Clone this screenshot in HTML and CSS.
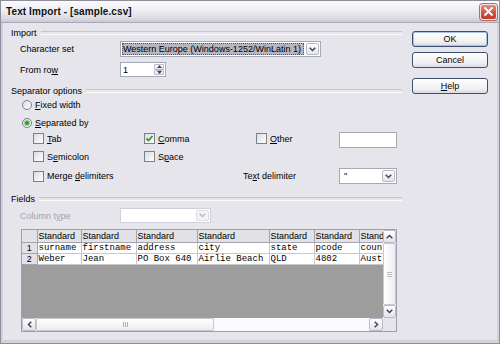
FILE: index.html
```html
<!DOCTYPE html>
<html>
<head>
<meta charset="utf-8">
<link rel="stylesheet" href="styles.css">
</head>
<body>
<div class="window">
  <div class="titlebar">
    <span class="title">Text Import - [sample.csv]</span>
    <span class="close"><svg width="11" height="11" viewBox="0 0 11 11"><path d="M1.5 1.5 L9.5 9.5 M9.5 1.5 L1.5 9.5" stroke="#fff" stroke-width="1.8" fill="none"/></svg></span>
  </div>
  <div class="content">
    <div class="main">
      <div class="group-title"><span>Import</span></div>
      <div class="row r-charset">
        <span class="lbl">Character set</span>
        <div class="select charset">
          <span class="sel-text"><span class="hl">Western Europe (Windows-1252/WinLatin 1)</span></span>
          <span class="drop"><svg width="7" height="5" viewBox="0 0 7 5"><path d="M0.7 0.7 L3.5 3.5 L6.3 0.7" stroke="#3c4660" stroke-width="1.5" fill="none"/></svg></span>
        </div>
      </div>
      <div class="row r-from">
        <span class="lbl">From ro<u>w</u></span>
        <div class="spin">
          <span class="spin-val">1</span>
          <span class="spin-btns">
            <span class="sb"><svg width="5" height="3" viewBox="0 0 5 3"><path d="M0 3 L2.5 0 L5 3 Z" fill="#3c4660"/></svg></span>
            <span class="sb"><svg width="5" height="3" viewBox="0 0 5 3"><path d="M0 0 L2.5 3 L5 0 Z" fill="#3c4660"/></svg></span>
          </span>
        </div>
      </div>

      <div class="group-title g-sep"><span>Separator options</span></div>
      <div class="radio-row r1"><span class="radio"></span><span><u>F</u>ixed width</span></div>
      <div class="radio-row r2"><span class="radio on"><span class="dot"></span></span><span><u>S</u>eparated by</span></div>

      <div class="checks">
        <div class="chk c-r1"><span class="box"></span><span><u>T</u>ab</span></div>
        <div class="chk c-r1"><span class="box on"><svg width="9" height="9" viewBox="0 0 9 9"><path d="M1.5 4.5 L3.5 6.5 L7.5 2" stroke="#21a121" stroke-width="1.8" fill="none"/></svg></span><span><u>C</u>omma</span></div>
        <div class="chk c-r1"><span class="box"></span><span><u>O</u>ther</span></div>
        <div class="textbox other"></div>

        <div class="chk c-r2"><span class="box"></span><span>S<u>e</u>micolon</span></div>
        <div class="chk c-r2"><span class="box"></span><span>S<u>p</u>ace</span></div>
        <div></div>
        <div></div>

        <div class="chk c-r3"><span class="box"></span><span>Merge <u>d</u>elimiters</span></div>
        <div class="txtdelim">Te<u>x</u>t delimiter</div>
        <div class="select small">
          <span class="sel-text white">"</span>
          <span class="drop"><svg width="7" height="5" viewBox="0 0 7 5"><path d="M0.7 0.7 L3.5 3.5 L6.3 0.7" stroke="#3c4660" stroke-width="1.5" fill="none"/></svg></span>
        </div>
      </div>

      <div class="group-title g-fields"><span>Fields</span></div>
      <div class="row r-coltype">
        <span class="lbl disabled">Column t<u>y</u>pe</span>
        <div class="select coltype">
          <span class="sel-text white"></span>
          <span class="drop dis"><svg width="7" height="5" viewBox="0 0 7 5"><path d="M0.7 0.7 L3.5 3.5 L6.3 0.7" stroke="#b8b8c0" stroke-width="1.5" fill="none"/></svg></span>
        </div>
      </div>

      <div class="grid-frame">
        <div class="grid-view">
          <table class="data">
            <colgroup>
              <col class="cn"><col class="w44"><col class="w55"><col class="w61"><col class="w72"><col class="w45"><col class="w45"><col class="w45">
            </colgroup>
            <tr class="hdr">
              <th class="corner"></th><th>Standard</th><th>Standard</th><th>Standard</th><th>Standard</th><th>Standard</th><th>Standard</th><th>Standard</th>
            </tr>
            <tr>
              <th class="num">1</th><td>surname</td><td>firstname</td><td>address</td><td>city</td><td>state</td><td>pcode</td><td>country</td>
            </tr>
            <tr>
              <th class="num">2</th><td>Weber</td><td>Jean</td><td>PO Box 640</td><td>Airlie Beach</td><td>QLD</td><td>4802</td><td>Australia</td>
            </tr>
          </table>
        </div>
        <div class="vscroll">
          <span class="sbtn"><svg width="7" height="5" viewBox="0 0 7 5"><path d="M0.7 4.3 L3.5 1.5 L6.3 4.3" stroke="#3c4660" stroke-width="1.5" fill="none"/></svg></span>
          <span class="vthumb"><span class="grip-h"></span></span>
          <span class="sbtn"><svg width="7" height="5" viewBox="0 0 7 5"><path d="M0.7 0.7 L3.5 3.5 L6.3 0.7" stroke="#3c4660" stroke-width="1.5" fill="none"/></svg></span>
        </div>
        <div class="hscroll">
          <span class="sbtn"><svg width="5" height="7" viewBox="0 0 5 7"><path d="M4.3 0.7 L1.5 3.5 L4.3 6.3" stroke="#3c4660" stroke-width="1.5" fill="none"/></svg></span>
          <span class="hthumb"><span class="grip-v"></span></span>
          <span class="htrack"></span>
          <span class="sbtn"><svg width="5" height="7" viewBox="0 0 5 7"><path d="M0.7 0.7 L3.5 3.5 L0.7 6.3" stroke="#3c4660" stroke-width="1.5" fill="none"/></svg></span>
        </div>
        <div class="sc-corner"></div>
      </div>
    </div>

    <div class="buttons">
      <div class="btn default">OK</div>
      <div class="btn cancel">Cancel</div>
      <div class="btn help"><u>H</u>elp</div>
    </div>
  </div>
</div>
</body>
</html>
```

FILE: styles.css
```css
* { box-sizing: border-box; }
html, body { margin: 0; padding: 0; }
body {
  width: 500px;
  height: 344px;
  overflow: hidden;
  font-family: "Liberation Sans", Arial, sans-serif;
  font-size: 9px;
  color: #000;
  background: #e5e4ea;
}
u { text-decoration: underline; text-underline-offset: 1px; }

.window {
  width: 500px;
  height: 344px;
  border: 1px solid #8d8d9c;
  background: #e6e5eb;
  display: flex;
  flex-direction: column;
  box-shadow: inset -2px -3px 0 #d2d2dc, inset 2px 0 0 #d2d2dc;
}

.titlebar {
  height: 22px;
  flex: none;
  display: flex;
  align-items: center;
  justify-content: space-between;
  padding: 0 2px 0 5px;
  background: linear-gradient(#fbfbfd 0%, #eeeef3 45%, #dcdce4 80%, #c9c9d4 100%);
  border-bottom: 1px solid #a8a8b6;
}
.title {
  font-weight: bold;
  font-size: 10px;
  color: #111;
  letter-spacing: 0.1px;
}
.close {
  width: 17px;
  height: 16px;
  border-radius: 3px;
  border: 1px solid #f3e9e6;
  background: linear-gradient(#e98c7c, #d4533f 55%, #c03a28);
  display: flex;
  align-items: center;
  justify-content: center;
  box-shadow: 0 0 0 1px #b96a5e;
}

.content {
  flex: 1;
  display: flex;
  padding: 3px 0 0 10px;
}
.main {
  width: 391px;
  display: flex;
  flex-direction: column;
}

.group-title {
  height: 12px;
  display: flex;
  align-items: center;
  gap: 4px;
  margin-top: 1px;
}
.group-title::after {
  content: "";
  flex: 1;
  height: 2px;
  border-top: 1px solid #c6c5cd;
  border-bottom: 1px solid #fafafc;
}
.g-sep { margin-top: 8px; }
.g-fields { margin-top: 9px; }

.row {
  display: flex;
  align-items: center;
  padding-left: 9px;
}
.lbl { width: 100px; flex: none; }
.disabled { color: #a3a2ac; }
.r-charset { margin-top: 2px; height: 16px; }
.r-from { margin-top: 5px; height: 15px; }
.r-coltype { margin-top: 3px; height: 15px; }

.select {
  display: flex;
  height: 100%;
  border: 1px solid #a5a9b6;
  background: #fff;
}
.select.charset { width: 201px; }
.select.coltype { width: 91px; border-color: #cfd0d8; }
.select.small { width: 58px; height: 16px; }
.sel-text {
  flex: 1;
  display: flex;
  align-items: center;
  padding: 1px;
  overflow: hidden;
  white-space: nowrap;
}
.sel-text .hl {
  flex: 1;
  height: 100%;
  display: flex;
  align-items: center;
  padding-left: 1px;
  background: #b6b6c0;
  outline: 1px dotted #555;
  outline-offset: -1px;
}
.sel-text.white { padding-left: 4px; }
.drop {
  width: 13px;
  flex: none;
  margin: 1px;
  border: 1px solid #b9bcc8;
  border-radius: 2px;
  background: linear-gradient(#ffffff, #e4e4ec);
  display: flex;
  align-items: center;
  justify-content: center;
}
.drop.dis { border-color: #dcdce2; background: #f4f4f7; }

.spin {
  width: 46px;
  height: 100%;
  display: flex;
  border: 1px solid #a5a9b6;
  background: #fff;
}
.spin-val {
  flex: 1;
  display: flex;
  align-items: center;
  padding-left: 2px;
}
.spin-btns {
  width: 12px;
  display: flex;
  flex-direction: column;
  padding: 1px;
  gap: 0;
}
.sb {
  flex: 1;
  border: 1px solid #b9bcc8;
  border-radius: 1px;
  background: linear-gradient(#ffffff, #e2e2ea);
  display: flex;
  align-items: center;
  justify-content: center;
}

.radio-row {
  display: flex;
  align-items: center;
  gap: 3px;
  padding-left: 11px;
  height: 10px;
}
.radio-row.r1 { margin-top: 3px; }
.radio-row.r2 { margin-top: 8px; }
.radio {
  width: 10px;
  height: 10px;
  border-radius: 50%;
  border: 1px solid #7d7f8c;
  background: linear-gradient(135deg, #dcdce2, #ffffff);
  display: flex;
  align-items: center;
  justify-content: center;
}
.dot {
  width: 4px;
  height: 4px;
  border-radius: 50%;
  background: #2ea02e;
  box-shadow: 0 0 0 1px #8fd08f;
}

.checks {
  margin-top: 4px;
  padding-left: 22px;
  display: grid;
  grid-template-columns: 111px 112px 83px 58px;
  grid-template-rows: 18px 18px 16px;
}
.chk {
  display: flex;
  align-items: center;
  gap: 3px;
  height: 11px;
}
.c-r1, .c-r2 { margin-top: 1px; }
.c-r3 { align-self: center; }
.box {
  width: 11px;
  height: 11px;
  flex: none;
  border: 1px solid #7d7f8c;
  background: linear-gradient(135deg, #dcdce2, #ffffff);
  display: flex;
  align-items: center;
  justify-content: center;
}
.textbox.other {
  height: 16px;
  border: 1px solid #a5a9b6;
  background: #fff;
}
.txtdelim {
  grid-column: 2 / 4;
  align-self: center;
  padding-left: 99px;
}

.grid-frame {
  margin-top: 6px;
  margin-left: 10px;
  width: 376px;
  height: 103px;
  border: 1px solid #9e9eaa;
  display: grid;
  grid-template-columns: 361px 13px;
  grid-template-rows: 88px 13px;
  background: #e6e5eb;
}
.grid-view {
  background: #9d9d9d;
  overflow: hidden;
}
table.data {
  border-collapse: collapse;
  table-layout: fixed;
  width: 382px;
}
col.cn { width: 15px; }
col.w44 { width: 44px; }
col.w55 { width: 55px; }
col.w61 { width: 61px; }
col.w72 { width: 72px; }
col.w45 { width: 45px; }
table.data th, table.data td {
  padding: 0 0 0 1px;
  white-space: nowrap;
  overflow: hidden;
  text-align: left;
  font-weight: normal;
}
tr.hdr th {
  height: 12px;
  background: #e2e2e6;
  border-right: 1px solid #a4a4ac;
  border-bottom: 1px solid #a4a4ac;
  font-size: 9px;
}
th.num {
  background: #e2e2e6;
  border-right: 1px solid #a4a4ac;
  border-bottom: 1px solid #a4a4ac;
  text-align: center !important;
  font-family: "Liberation Sans", Arial, sans-serif;
  font-size: 9px;
  height: 11px;
  padding: 0 !important;
}
table.data td {
  height: 11px;
  background: #fff;
  border-right: 1px solid #c8c8cc;
  border-bottom: 1px solid #c8c8cc;
  font-family: "Liberation Mono", "Courier New", monospace;
  font-size: 9px;
  line-height: 10px;
}

.vscroll {
  display: flex;
  flex-direction: column;
  background: #f3f3f6;
}
.hscroll {
  display: flex;
  background: #f3f3f6;
}
.sbtn {
  width: 13px;
  height: 13px;
  flex: none;
  border: 1px solid #b9bcc8;
  border-radius: 2px;
  background: linear-gradient(#ffffff, #e2e2ea);
  display: flex;
  align-items: center;
  justify-content: center;
}
.hscroll .sbtn { width: 14px; }
.vthumb {
  flex: 1;
  border: 1px solid #c6c8d2;
  border-radius: 2px;
  background: linear-gradient(90deg, #ffffff, #ececf2);
  display: flex;
  align-items: center;
  justify-content: center;
}
.grip-h {
  width: 5px;
  height: 5px;
  border-top: 1px solid #b8b8c2;
  border-bottom: 1px solid #b8b8c2;
  background: linear-gradient(#fff 1px, #b8b8c2 1px, #b8b8c2 2px, #fff 2px);
  background-size: 5px 2px;
}
.hthumb {
  width: 178px;
  border: 1px solid #c6c8d2;
  border-radius: 2px;
  background: linear-gradient(#ffffff, #ececf2);
  display: flex;
  align-items: center;
  justify-content: center;
}
.grip-v {
  width: 5px;
  height: 5px;
  background: repeating-linear-gradient(90deg, #b0b0ba 0 1px, transparent 1px 2px);
}
.htrack { flex: 1; background: #fafafc; }
.sc-corner { background: #e6e5eb; }

.buttons {
  margin-left: 10px;
  width: 76px;
  display: flex;
  flex-direction: column;
}
.btn {
  height: 16px;
  border: 1px solid #3f4f6f;
  border-radius: 3px;
  background: linear-gradient(#ffffff, #f0f0f4 70%, #d9d9e2);
  display: flex;
  align-items: center;
  justify-content: center;
}
.btn.default {
  margin-top: 5px;
  box-shadow: inset 0 0 0 1px #a9c0e8;
}
.btn.cancel { margin-top: 5px; }
.btn.help { margin-top: 10px; }
```
